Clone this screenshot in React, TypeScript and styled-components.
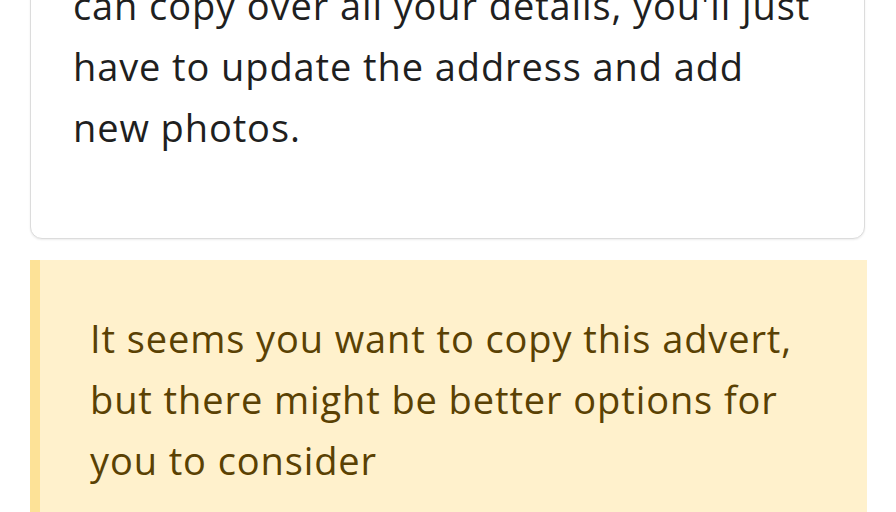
import React from 'react';
import styled, { createGlobalStyle } from 'styled-components';

const GlobalStyle = createGlobalStyle`
  html, body {
    margin: 0;
    padding: 0;
    background: #ffffff;
  }
  body {
    font-family: "Open Sans", Roboto, sans-serif;
  }
`;

const Page = styled.div`
  height: 512px;
  overflow: hidden;
  padding: 0 31px 0 30px;
  display: flex;
  flex-direction: column;
  gap: 21px;
`;

const Card = styled.div`
  margin-top: -64px;
  padding: 38px 10px 80px 42px;
  border: 1.5px solid #dcdcdc;
  border-radius: 12px;
  box-shadow: 0 1px 2px rgba(0, 0, 0, 0.08);
  background: #fff;
`;

const Text = styled.p<{ $tone?: 'dark' | 'warn' }>`
  margin: 0;
  font-size: 38px;
  line-height: 61px;
  letter-spacing: 0.9px;
  white-space: nowrap;
  color: ${(p) => (p.$tone === 'warn' ? '#5a4103' : '#1f1f1f')};
`;

const Notice = styled.div`
  background: #fff1cc;
  border-left: 10px solid #fde297;
  padding: 48px 10px 40px 50px;
  margin-right: -2px;
`;

const App = () => {
  return (
    <>
      <GlobalStyle />
      <Page>
        <Card>
          <Text>
            can copy over all your details, you'll just
            <br />
            have to update the address and add
            <br />
            new photos.
          </Text>
        </Card>
        <Notice>
          <Text $tone="warn">
            It seems you want to copy this advert,
            <br />
            but there might be better options for
            <br />
            you to consider
          </Text>
        </Notice>
      </Page>
    </>
  );
};

export default App;
